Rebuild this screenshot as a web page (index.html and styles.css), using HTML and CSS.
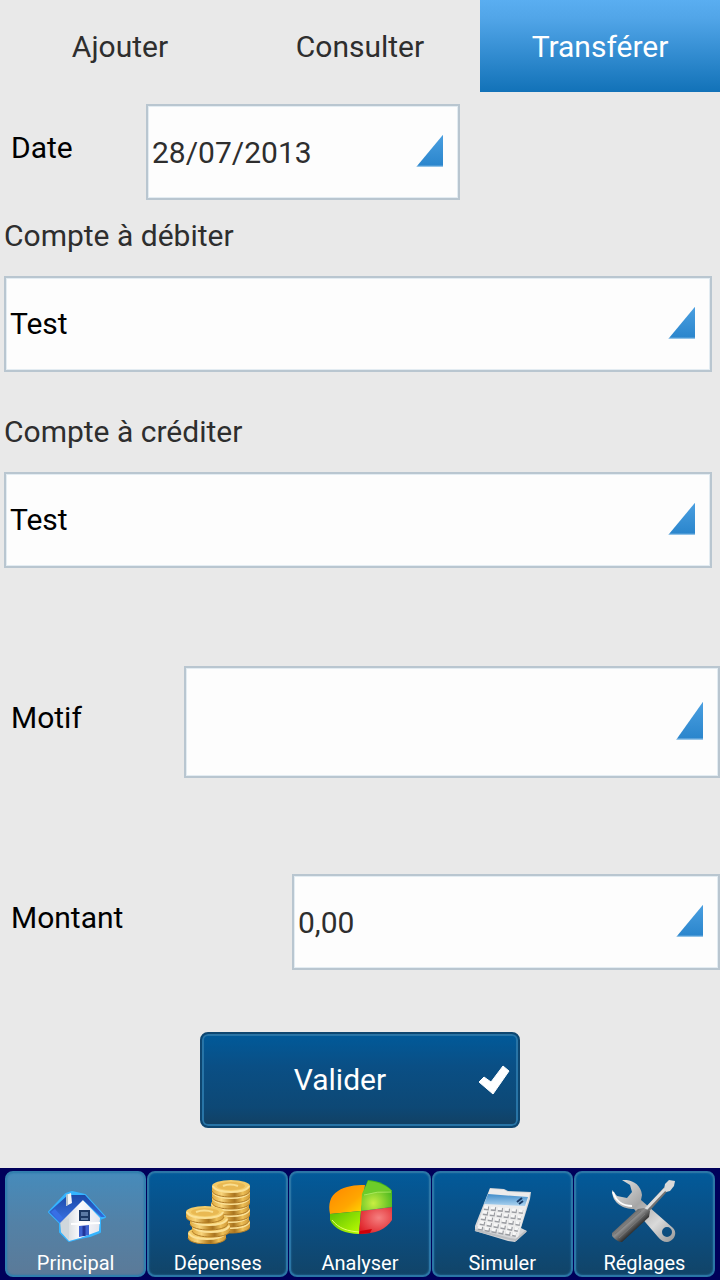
FILE: index.html
```html
<!DOCTYPE html>
<html lang="fr">
<head>
  <meta charset="UTF-8">
  <meta name="viewport" content="width=device-width, initial-scale=1.0">
  <title>Transférer</title>
  <link rel="stylesheet" href="styles.css">
</head>
<body>
  <nav class="tabs">
    <a href="#ajouter">Ajouter</a>
    <a href="#consulter">Consulter</a>
    <a href="#transferer" class="active">Transférer</a>
  </nav>

  <form class="transfer-form">
    <div class="row row-date">
      <label for="date">Date</label>
      <div class="field">
        <input type="text" id="date" name="date" value="28/07/2013">
      </div>
    </div>

    <div class="account">
      <label for="debit">Compte à débiter</label>
      <div class="field">
        <select id="debit" name="debit"><option>Test</option></select>
      </div>
    </div>

    <div class="account">
      <label for="credit">Compte à créditer</label>
      <div class="field">
        <select id="credit" name="credit"><option>Test</option></select>
      </div>
    </div>

    <div class="row row-motif">
      <label for="motif">Motif</label>
      <div class="field">
        <input type="text" id="motif" name="motif">
      </div>
    </div>

    <div class="row row-montant">
      <label for="montant">Montant</label>
      <div class="field">
        <input type="text" id="montant" name="montant" inputmode="decimal" value="0,00">
      </div>
    </div>

    <button type="button" class="submit">
      <span>Valider</span>
      <svg class="check" viewBox="0 0 32 30" aria-hidden="true">
        <path d="M1 17 L6 12 L13 17 L25 1 L31 6 L15 29 Z" fill="#fff" stroke="#fff" stroke-width="1" stroke-linejoin="round"/>
      </svg>
    </button>
  </form>

  <nav class="bottom-bar">
    <a href="#principal" class="active">
      <svg viewBox="0 0 64 64" aria-hidden="true">
        <defs>
          <linearGradient id="roof" x1="0" y1="0" x2="0" y2="1">
            <stop offset="0" stop-color="#1c49a8"/>
            <stop offset="1" stop-color="#3b73e6"/>
          </linearGradient>
          <linearGradient id="wall" x1="0" y1="0" x2="1" y2="0">
            <stop offset="0" stop-color="#c3cbd1"/>
            <stop offset=".5" stop-color="#fbfbfd"/>
            <stop offset="1" stop-color="#e3e5ee"/>
          </linearGradient>
        </defs>
        <path d="M5 32 L22 14 L28 12 L41 15 L61 37 L56 39 V52 L46 56 L36 58 L25 61 L16 52 V43 Z" fill="#35b4ff" stroke="#35b4ff" stroke-width="2" stroke-linejoin="round"/>
        <path d="M16 42 L38 19 L56 38 L55 51 L36 58 L25 61 L17 52 Z" fill="url(#wall)"/>
        <path d="M17 43 L25 38 V60 L17 52 Z" fill="#d0d7dc"/>
        <path d="M5 32 L24 15 L41 15 L61 37 L57 37 L39 20 L16 43 Z" fill="url(#roof)"/>
        <path d="M7 32 L11 29 L19 38 L16 42 Z" fill="#386fe5"/>
        <path d="M22 15 L27 13 L28 23 L22 26 Z" fill="#f6f6f6"/>
        <path d="M22 15 L24 14 V25 L22 26 Z" fill="#b5c2cc"/>
        <path d="M35 30 H46 V41 H35 Z" fill="#1b3763"/>
        <path d="M37 32 H44 V36 H37 Z M37 38 H44 V40 H37 Z" fill="#5b7aa5"/>
        <path d="M35 46 L45 45 V55 L35 57 Z" fill="#3f63d0"/>
        <path d="M40 46 V56" stroke="#22369a" stroke-width="3"/>
        <path d="M27 44 L56 43" stroke="#fff" stroke-width="2"/>
      </svg>
      <span>Principal</span>
    </a>
    <a href="#depenses">
      <svg viewBox="0 0 64 64" aria-hidden="true">
        <defs>
          <linearGradient id="gold" x1="0" y1="0" x2="1" y2="0">
            <stop offset="0" stop-color="#e0ac42"/>
            <stop offset=".25" stop-color="#f9d57c"/>
            <stop offset=".5" stop-color="#c08a2c"/>
            <stop offset=".6" stop-color="#a87420"/>
            <stop offset=".8" stop-color="#edbf58"/>
            <stop offset="1" stop-color="#d09a38"/>
          </linearGradient>
          <g id="coin">
            <path d="M0 6 V11 C2 19 36 19 38 11 V6 Z" fill="url(#gold)"/>
            <path d="M0 11 C2 19 36 19 38 11" fill="none" stroke="#b27c26" stroke-width="1"/>
            <ellipse cx="19" cy="6" rx="19" ry="6" fill="#f3cb68"/>
            <path d="M1 6 C3 14 35 14 37 6" fill="none" stroke="#fbe196" stroke-width="2"/>
          </g>
        </defs>
        <use href="#coin" x="26" y="36"/>
        <use href="#coin" x="25" y="30"/>
        <use href="#coin" x="26" y="24"/>
        <use href="#coin" x="25" y="18"/>
        <use href="#coin" x="26" y="12"/>
        <use href="#coin" x="26" y="6"/>
        <use href="#coin" x="26" y="0"/>
        <ellipse cx="45" cy="6" rx="14" ry="4" fill="#e9b953"/>
        <path d="M37 6 Q44 3 52 6" fill="none" stroke="#f9df91" stroke-width="2"/>
        <use href="#coin" x="2" y="47"/>
        <use href="#coin" x="6" y="40"/>
        <use href="#coin" x="4" y="33"/>
        <use href="#coin" x="0" y="26"/>
        <ellipse cx="19" cy="32" rx="14" ry="4" fill="#e9b953"/>
        <path d="M10 32 Q18 29 27 32" fill="none" stroke="#f9df91" stroke-width="2"/>
      </svg>
      <span>Dépenses</span>
    </a>
    <a href="#analyser">
      <svg viewBox="0 0 64 64" aria-hidden="true">
        <defs>
          <linearGradient id="orange" x1="0" y1="0" x2="1" y2="1">
            <stop offset="0" stop-color="#ff8500"/>
            <stop offset=".6" stop-color="#ffa600"/>
            <stop offset="1" stop-color="#ffe000"/>
          </linearGradient>
          <radialGradient id="green" cx=".4" cy=".75" r=".7">
            <stop offset="0" stop-color="#c9ee42"/>
            <stop offset="1" stop-color="#43b51d"/>
          </radialGradient>
          <radialGradient id="red" cx=".6" cy=".4" r=".7">
            <stop offset="0" stop-color="#f58080"/>
            <stop offset="1" stop-color="#df2027"/>
          </radialGradient>
          <linearGradient id="lime" x1="0" y1="0" x2="1" y2="1">
            <stop offset="0" stop-color="#58bd05"/>
            <stop offset="1" stop-color="#bfff00"/>
          </linearGradient>
        </defs>
        <path d="M33 31 L2 34 C0 24 2 16 10 11 C17 6 27 5 37 5 Z" fill="url(#orange)"/>
        <path d="M33 31 L2 34 V40 C6 49 18 54 31 54 Z" fill="url(#lime)"/>
        <path d="M4 40 C11 49 20 51 31 52" fill="none" stroke="#e9ff68" stroke-width="1"/>
        <path d="M33 31 L64 27 V40 C58 49 48 54 31 54 Z" fill="url(#red)"/>
        <path d="M32 51 L44 49 L42 53 L31 54 Z" fill="#cf0008"/>
        <path d="M33 31 L34 14 L40 0 C51 1 60 5 64 11 V27 Z" fill="url(#green)"/>
        <path d="M35 14 L40 1 C51 2 59 6 64 11 Q49 10 35 16 Z" fill="#6dcc2a"/>
        <path d="M36 15 Q49 11 63 12" fill="none" stroke="#a8e85c" stroke-width="1"/>
      </svg>
      <span>Analyser</span>
    </a>
    <a href="#simuler">
      <svg viewBox="0 0 64 64" aria-hidden="true">
        <defs>
          <linearGradient id="screen" x1="0" y1="0" x2="0" y2="1">
            <stop offset="0" stop-color="#3f8cca"/>
            <stop offset="1" stop-color="#aed4f0"/>
          </linearGradient>
        </defs>
        <path d="M5 46 L20 8 L34 9 L38 11 L61 12 L60 19 L51 48 L57 51 L45 62 L38 61 L5 51 Z" fill="#d5d6d8"/>
        <path d="M7 46 L20 9 L34 10 L38 12 L60 13 L48 58 Z" fill="#ececec"/>
        <path d="M18 14 L58 17 L55 26 L14 24 Z" fill="url(#screen)"/>
        <path d="M47 22 L52 18 M49 24 L53 21" stroke="#173a67" stroke-width="2"/>
        <g fill="none" stroke="#9b9da2" stroke-width="4" stroke-dasharray="5 2">
          <path d="M14 28 L53 32"/>
          <path d="M13 33 L51 38"/>
          <path d="M11 38 L50 44"/>
          <path d="M10 43 L48 50"/>
          <path d="M8 48 L46 55"/>
        </g>
        <g fill="none" stroke="#f7f7f7" stroke-width="3" stroke-dasharray="4 3">
          <path d="M14 27 L53 31"/>
          <path d="M13 32 L51 37"/>
          <path d="M11 37 L50 43"/>
          <path d="M10 42 L48 49"/>
          <path d="M8 47 L46 54"/>
        </g>
        <path d="M5 50 L40 59 L46 60 L56 51" fill="none" stroke="#bcbec1" stroke-width="2"/>
      </svg>
      <span>Simuler</span>
    </a>
    <a href="#reglages">
      <svg viewBox="0 0 64 64" aria-hidden="true">
        <defs>
          <linearGradient id="steel" x1="0" y1="0" x2="1" y2="1">
            <stop offset="0" stop-color="#e9e9e9"/>
            <stop offset=".4" stop-color="#a6a6a6"/>
            <stop offset=".7" stop-color="#dadada"/>
            <stop offset="1" stop-color="#969696"/>
          </linearGradient>
          <linearGradient id="handle" x1="0" y1="0" x2="1" y2="1">
            <stop offset=".2" stop-color="#333"/>
            <stop offset=".45" stop-color="#8d8d8d"/>
            <stop offset=".65" stop-color="#222"/>
          </linearGradient>
        </defs>
        <path d="M10 0 C19 -1 29 4 30 15 L29 20 L61 48 C66 53 62 61 55 62 Q50 62 46 57 L22 29 C12 29 0 24 0 10 L5 16 L15 18 L20 12 L18 5 Z M55 47 A5 5 0 1 0 55 57 A5 5 0 1 0 55 47 Z" fill="url(#steel)" fill-rule="evenodd"/>
        <path d="M1 12 C4 22 12 26 20 26" fill="none" stroke="#fff" stroke-width="2"/>
        <path d="M34 31 L54 9" stroke="#737373" stroke-width="5"/>
        <path d="M33 30 L53 9" stroke="#dedede" stroke-width="3"/>
        <path d="M52 9 L53 4 L57 0 L63 1 L62 6 L58 11 L54 12 Z" fill="#d9d9d9"/>
        <path d="M0 53 L26 29 L32 28 L38 31 L37 37 L10 62 Q5 62 0 56 Z" fill="url(#handle)"/>
        <path d="M3 54 L29 31 M7 58 L33 34" stroke="#777" stroke-width="1"/>
      </svg>
      <span>Réglages</span>
    </a>
  </nav>
</body>
</html>
```
FILE: styles.css
```css
* {
  box-sizing: border-box;
}
body {
  margin: 0;
  min-height: 100vh;
  display: flex;
  flex-direction: column;
  background: #e9e9e9;
  color: #000;
  font-family: Roboto, "Liberation Sans", sans-serif;
  font-size: 30px;
  line-height: 40px;
}
a {
  color: inherit;
  text-decoration: none;
}

/* Top tabs */
.tabs {
  display: flex;
}
.tabs a {
  flex: 1;
  padding: 27px 0 25px;
  text-align: center;
  color: #2e2e2e;
}
.tabs a.active {
  color: #fff;
  background: linear-gradient(#5aaef1, #51a5e8 20%, #1272b8);
}

/* Form */
.transfer-form {
  flex: 1;
  display: flex;
  flex-direction: column;
  padding: 12px 0 40px;
}
.row {
  display: flex;
  align-items: center;
}
.row label {
  padding: 0 0 8px 11px;
}
.row .field {
  flex: 1;
}
.row-date label {
  width: 146px;
}
.row-date .field {
  flex: 0 1 314px;
}
.row-motif {
  margin-top: 98px;
}
.row-motif label {
  width: 184px;
}
.row-montant {
  margin-top: 96px;
}
.row-montant label {
  width: 292px;
}
.account {
  padding: 16px 8px 0 4px;
}
.account + .account {
  padding-top: 40px;
}
.account label {
  display: block;
  margin-bottom: 20px;
  color: #2e2e2e;
}
.field {
  position: relative;
}
.field input,
.field select {
  display: block;
  width: 100%;
  height: 96px;
  margin: 0;
  padding: 0 50px 0 4px;
  border: 2px solid #b9c6d0;
  border-radius: 0;
  background: #fdfdfd;
  box-shadow: inset 0 0 0 1px #e3ecf2;
  color: #2e2e2e;
  font: inherit;
  appearance: none;
}
.field select {
  color: #000;
}
.row-motif .field input {
  height: 112px;
}
.field::after {
  content: "";
  position: absolute;
  right: 17px;
  top: 32%;
  width: 27px;
  height: 34%;
  background: linear-gradient(#4a9fe0, #2b86cd 94%, #b5d7f0);
  clip-path: polygon(100% 0, 100% 100%, 0 100%);
  pointer-events: none;
}

.submit {
  display: flex;
  align-items: center;
  width: 320px;
  height: 96px;
  margin: 62px auto 0;
  padding: 0 8px 0 0;
  border: 2px solid #0e4670;
  border-radius: 8px;
  background: linear-gradient(#005a9a, #0a4f85 35%, #0d4875 80%, #124063);
  box-shadow: inset 0 0 0 2px #2874a6;
  color: #fff;
  font: inherit;
  cursor: pointer;
}
.submit span {
  flex: 1;
}
.check {
  width: 32px;
  height: 30px;
}

/* Bottom navigation */
.bottom-bar {
  display: flex;
  gap: 1px;
  padding: 3px 5px;
  background: #00005a;
  color: #fff;
  font-size: 20px;
  line-height: 24px;
}
.bottom-bar a {
  flex: 1;
  display: flex;
  flex-direction: column;
  align-items: center;
  gap: 7px;
  height: 106px;
  padding-top: 7px;
  border: 2px solid #2b76a6;
  border-radius: 8px;
  background: linear-gradient(#025a9a, #0b4e82 50%, #114468);
  box-shadow: inset 0 0 2px #2b76a6;
}
.bottom-bar a.active {
  border-color: #327fae;
  background: linear-gradient(#468bbb, #5381a6 50%, #5b7a98);
}
.bottom-bar svg {
  width: 64px;
  height: 64px;
}
```
